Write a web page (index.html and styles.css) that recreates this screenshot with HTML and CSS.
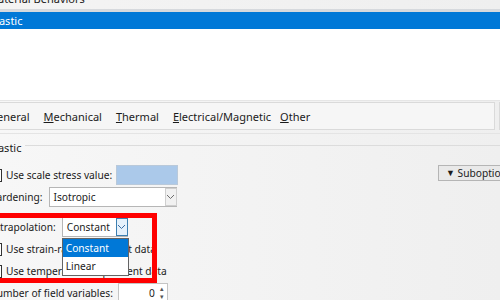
FILE: index.html
```html
<html>
    <head>
        <title>Edit Material</title>
        <link rel="stylesheet" href="styles.css">
    </head>
    <body>
        <div class="title-strip"><span class="title-text">Material Behaviors</span></div>
        <div class="behaviors">
            <div class="behavior selected">Elastic</div>
        </div>

        <div class="editor">
            <div class="tab-row">
                <div class="tabs">
                    <span class="tab"><u>G</u>eneral</span>
                    <span class="tab"><u>M</u>echanical</span>
                    <span class="tab"><u>T</u>hermal</span>
                    <span class="tab"><u>E</u>lectrical/Magnetic</span>
                    <span class="tab tab-last"><u>O</u>ther</span>
                </div>
                <div class="tabs-end"></div>
            </div>
            <div class="sep"></div>

            <div class="group-head">
                <span class="group-label">Elastic</span>
                <span class="group-line"></span>
            </div>

            <div class="group-body">
                <div class="row row-scale">
                    <span class="check"></span>
                    <span class="label">Use scale stress value:</span>
                    <span class="scale-box"></span>
                    <span class="subopt"><span class="tri">&#9660;</span> Suboptions</span>
                </div>
                <div class="row row-hard">
                    <span class="label">Hardening:</span>
                    <span class="combo combo-hard">Isotropic<span class="arrow"><svg width="9" height="6" viewBox="0 0 9 6"><path d="M1 1 L4.5 4.5 L8 1" fill="none" stroke="#6d6d6d" stroke-width="1"/></svg></span></span>
                </div>
                <div class="row row-extra">
                    <span class="label">Extrapolation:</span>
                    <span class="combo combo-extra">Constant<span class="arrow active"><svg width="9" height="6" viewBox="0 0 9 6"><path d="M1 1 L4.5 4.5 L8 1" fill="none" stroke="#3a6ea5" stroke-width="1"/></svg></span>
                        <span class="popup">
                            <span class="opt opt-sel">Constant</span>
                            <span class="opt">Linear</span>
                        </span>
                    </span>
                </div>
                <div class="row row-check">
                    <span class="check"></span>
                    <span class="label">Use strain-rate-dependent data</span>
                </div>
                <div class="row row-check">
                    <span class="check"></span>
                    <span class="label">Use temperature-dependent data</span>
                </div>
                <div class="row row-num">
                    <span class="label">Number of field variables:</span>
                    <span class="spin">0<span class="spin-btns"><span>&#9652;</span><span>&#9662;</span></span></span>
                </div>
            </div>

            <!-- red highlight drawn over the screenshot -->
            <div class="mark"></div>
        </div>
    </body>
</html>
```

FILE: styles.css
```css
body {
    margin: 0;
    width: 500px;
    height: 300px;
    overflow: hidden;
    background-color: white;
    font-family: "Noto Sans", "Open Sans", sans-serif;
    font-size: 11px;
    color: #1b1b1b;
}

.title-strip {
    height: 9px;
    overflow: hidden;
    background: linear-gradient(to right, #f4f4f4, #efefef);
    border-bottom: 3px solid #d6d9dd;
}
.title-text {
    display: block;
    margin-top: -9px;
    margin-left: -12px;
    line-height: 16px;
}

.behaviors {
    height: 88px;
    background-color: white;
}
.behavior {
    height: 17px;
    line-height: 17px;
    text-indent: -10px;
}
.selected {
    background-color: #0078d7;
    color: white;
}

.editor {
    position: relative;
    height: 199px;
    border-top: 1px solid #e6e6e6;
    background: linear-gradient(to right, #f7f7f7, #efefef);
}

.tab-row {
    display: flex;
    gap: 4px;
    margin-top: 1px;
}
.tabs {
    display: flex;
    width: 494px;
    height: 26px;
    margin-left: -1px;
    border: 1px solid #dadada;
    background-color: #f6f6f6;
    align-items: center;
}
.tab {
    padding: 0 7px;
}
.tab:first-child {
    margin-left: -18px;
}
.tab-last {
    margin-left: -5px;
}
.tabs-end {
    flex: 1;
    height: 26px;
    border: 1px solid #dadada;
    border-right: none;
}

.sep {
    margin-top: 3px;
    height: 1px;
    background-color: #e4e4e4;
}

.group-head {
    display: flex;
    align-items: center;
    margin-top: 5px;
    height: 16px;
}
.group-label {
    margin-left: -11px;
    padding-right: 4px;
}
.group-line {
    flex: 1;
    height: 1px;
    margin-top: -3px;
    background-color: #dcdcdc;
}

.group-body {
    margin-left: -11px;
    margin-top: 10px;
    font-size: 10.2px;
}

.row {
    display: flex;
    align-items: center;
}
.label {
    white-space: nowrap;
}
.check {
    width: 11px;
    height: 11px;
    border: 1px solid #333;
    background-color: white;
    margin-right: 4px;
}

.row-scale {
    height: 20px;
}
.scale-box {
    width: 60px;
    height: 18px;
    margin-left: 4px;
    border: 1px solid #b9c9da;
    background-color: #abc9ea;
}
.subopt {
    margin-left: auto;
    align-self: flex-start;
    margin-right: -13px;
    width: 66px;
    height: 14px;
    line-height: 14px;
    padding-left: 7px;
    border: 1px solid #b5b5b5;
    background-color: #e9e9e9;
    white-space: nowrap;
}
.tri {
    font-size: 9px;
    position: relative;
    top: -1px;
}

.combo {
    position: relative;
    display: flex;
    align-items: center;
    height: 18px;
    border: 1px solid #b6b6b6;
    background-color: white;
    padding-left: 4px;
}
.arrow {
    margin-left: auto;
    width: 10px;
    height: 16px;
    border: 1px solid #cfcfcf;
    background-color: #f1f1f1;
    display: flex;
    align-items: center;
    justify-content: center;
    margin-right: -1px;
}
.arrow.active {
    border-color: #3c7fb1;
    background-color: #e5f1fb;
}

.row-hard {
    height: 22px;
    margin-top: 1px;
}
.combo-hard {
    margin-left: 6px;
    width: 122px;
}

.row-extra {
    height: 22px;
    margin-top: 8px;
}
.combo-extra {
    margin-left: 6px;
    width: 60px;
}

.popup {
    position: absolute;
    left: -1px;
    top: 20px;
    width: 65px;
    border: 1px solid #646464;
    background-color: white;
    z-index: 2;
}
.opt {
    display: block;
    height: 18px;
    line-height: 18px;
    padding-left: 3px;
}
.opt-sel {
    background-color: #0078d7;
    color: white;
}

.row-check {
    height: 22px;
}

.row-num {
    height: 20px;
    margin-top: 1px;
}
.spin {
    display: flex;
    align-items: center;
    justify-content: flex-end;
    margin-left: 5px;
    width: 48px;
    height: 18px;
    border: 1px solid #c4c4c4;
    background-color: white;
}
.spin-btns {
    display: flex;
    flex-direction: column;
    width: 9px;
    margin-left: 3px;
    font-size: 7px;
    line-height: 8px;
    color: #555;
    text-align: center;
}

.mark {
    position: absolute;
    left: -5px;
    top: 112px;
    width: 152px;
    height: 60px;
    border: 5px solid #ff0000;
    z-index: 3;
    pointer-events: none;
}
```
